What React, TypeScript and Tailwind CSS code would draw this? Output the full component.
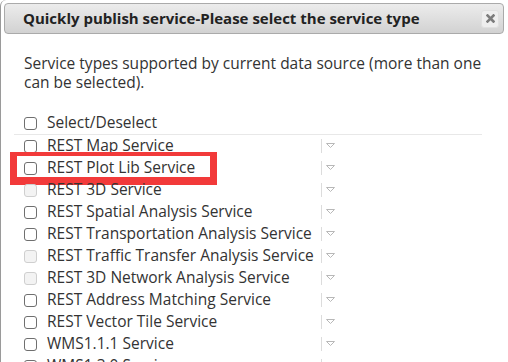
import React from "react";

const rows: { label: string; disabled?: boolean }[] = [
  { label: "REST Map Service" },
  { label: "REST Plot Lib Service" },
  { label: "REST 3D Service", disabled: true },
  { label: "REST Spatial Analysis Service" },
  { label: "REST Transportation Analysis Service" },
  { label: "REST Traffic Transfer Analysis Service", disabled: true },
  { label: "REST 3D Network Analysis Service", disabled: true },
  { label: "REST Address Matching Service" },
  { label: "REST Vector Tile Service" },
  { label: "WMS1.1.1 Service" },
  { label: "WMS1.3.0 Service" },
];

function Box({ disabled }: { disabled?: boolean }) {
  return (
    <span
      className={
        "inline-block w-[13px] h-[13px] rounded-[3px] border shrink-0 " +
        (disabled ? "border-[#cfcfcf] bg-[#f3f3f3]" : "border-[#6f6f6f] bg-white")
      }
    />
  );
}

function Arrow() {
  return (
    <div className="flex items-center gap-[4px] ml-[5px]">
      <span className="w-px h-[14px] bg-[#dcdcdc]" />
      <svg width="9" height="6" viewBox="0 0 9 6">
        <path d="M0.5 0.5 H8.5 L4.5 4.5 Z" fill="none" stroke="#b8b8b8" strokeWidth="1" />
      </svg>
    </div>
  );
}

export default function App() {
  return (
    <div
      className="w-[508px] h-[362px] overflow-hidden bg-white text-[#333]"
      style={{ fontFamily: '"Open Sans", "Noto Sans", sans-serif' }}
    >
      <div className="h-[400px] border-l border-[#9a9a9a] rounded-tl-[6px] pt-[3px] pl-[3px] pr-[4px]">
        <div className="h-[31px] rounded-[4px] border border-[#aaaaaa] bg-gradient-to-b from-[#ececec] to-[#d2d2d2] flex items-center justify-between pl-[18px] pr-[4px]">
          <span className="text-[15px] font-bold text-[#222] leading-none">
            Quickly publish service-Please select the service type
          </span>
          <span className="w-[18px] h-[18px] rounded-[3px] bg-[#eeeeee] border border-[#e0e0e0] flex items-center justify-center">
            <svg width="9" height="9" viewBox="0 0 9 9">
              <path d="M1.5 1.5 L7.5 7.5 M7.5 1.5 L1.5 7.5" stroke="#7c7c7c" strokeWidth="2.6" strokeLinecap="square" />
            </svg>
          </span>
        </div>
        <div className="pl-[20px] pt-[20px] text-[15.5px] leading-[19px] pr-[8px]">
          Service types supported by current data source (more than one can be selected).
        </div>
        <div className="mt-[21px] ml-[10px] w-[468px] h-[22px] flex items-center gap-[10px] pl-[10px] text-[15.5px] border-b border-[#e8e8e8] pb-[1px]">
          <Box />
          <span>Select/Deselect</span>
        </div>
        <div className="flex flex-col">
          {rows.map((r, i) => (
            <div key={r.label} className="relative h-[22px] flex items-center pl-[20px]">
              {i === 1 && (
                <div className="absolute left-[6px] top-[-5px] w-[207px] h-[33px] border-l-[7px] border-r-[7px] border-t-[4px] border-b-[8px] border-[#f23a3a]" />
              )}
              <div className="flex items-center gap-[10px] w-[292px] text-[15.5px] whitespace-nowrap">
                <Box disabled={r.disabled} />
                <span>{r.label}</span>
              </div>
              <Arrow />
            </div>
          ))}
        </div>
      </div>
    </div>
  );
}
